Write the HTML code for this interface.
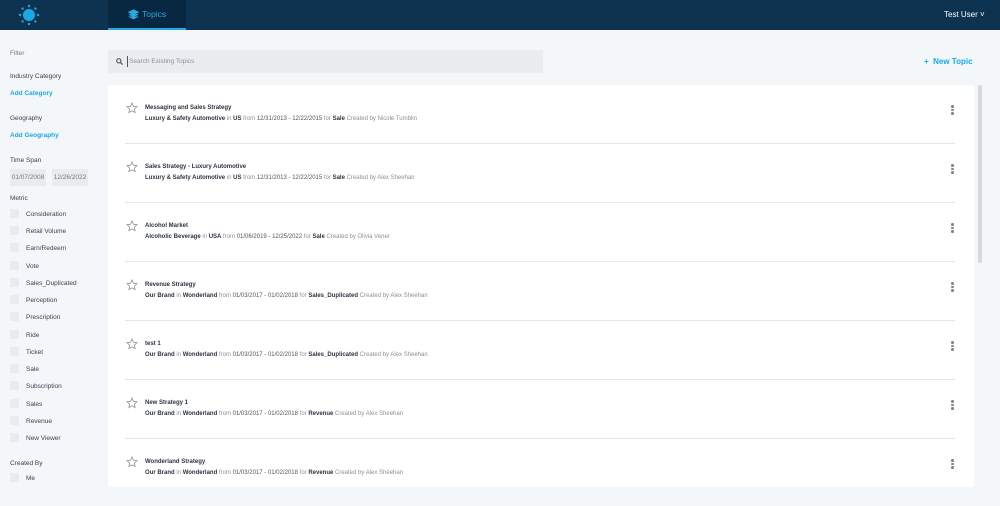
<!DOCTYPE html>
<html><head><style>
*{margin:0;padding:0;box-sizing:border-box}
body{width:1000px;height:506px;overflow:hidden;background:#f4f7fa;font-family:"Liberation Sans",sans-serif;font-size:7px;color:#2d3440;position:relative}
.hdr{position:absolute;left:0;top:0;width:1000px;height:30px;background:#0e3350}
.tab{position:absolute;left:108px;top:0;width:78px;height:30px;background:#072840;border-bottom:2px solid #27a8e0;color:#2aa8e0;font-size:8.5px;line-height:29px;padding-left:34px}
.user{position:absolute;left:944px;top:10px;color:#fff;font-size:8px}
.a{position:absolute;white-space:nowrap}
.lbl{color:#3a4150;font-size:6.5px}
.blue{color:#1ba9e6;font-weight:bold;font-size:6.5px}
.cb{position:absolute;left:10px;width:9px;height:9px;background:#e9ecef}
.ci{position:absolute;left:26px;font-size:6.5px;color:#3a4150}
.date{position:absolute;top:169px;height:17px;background:#e9ecef;color:#777;font-size:6.5px;line-height:17px;text-align:center}
.search{position:absolute;left:108px;top:50px;width:435px;height:23px;background:#e9edf0}
.card{position:absolute;left:108px;top:85px;width:866px;height:402px;background:#fff;border-radius:3px}
.row{position:absolute;left:17px;width:830px;height:59px;border-bottom:1px solid #e3e6ea}
.t{position:absolute;left:20px;top:20px;font-weight:bold;font-size:6px;color:#2d3440}
.s{position:absolute;left:20px;top:31px;font-size:6px;color:#8a909a;white-space:nowrap}
.s b{color:#2d3440}
.star{position:absolute;left:1px;top:17px}
.dots{position:absolute;left:826px;top:20px;width:3px}
.dots i{display:block;width:2.5px;height:2.5px;border-radius:50%;background:#7d8590;margin-bottom:1px}
</style></head><body>
<div class="hdr">
<svg style="position:absolute;left:18px;top:4px" width="22" height="22" viewBox="0 0 22 22"><circle cx="11" cy="11" r="6" fill="#1ba9e6"/><g fill="#1ba9e6"><circle cx="11" cy="2" r="1.2"/><circle cx="11" cy="20" r="1.2"/><circle cx="2" cy="11" r="1.2"/><circle cx="20" cy="11" r="1.2"/><circle cx="4.6" cy="4.6" r="1.2"/><circle cx="17.4" cy="4.6" r="1.2"/><circle cx="4.6" cy="17.4" r="1.2"/><circle cx="17.4" cy="17.4" r="1.2"/></g></svg>
<div class="tab"><svg style="position:absolute;left:20px;top:9px" width="11" height="11" viewBox="0 0 11 11"><path d="M5.5 1L10 3.2 5.5 5.4 1 3.2z M1 5.3l4.5 2.2 4.5-2.2 M1 7.5l4.5 2.2 4.5-2.2" fill="#2aa8e0" stroke="#2aa8e0" stroke-width="1.2"/></svg>Topics</div>
<div class="user">Test User ˅</div>
</div>
<div class="a lbl" style="left:10px;top:50px;color:#777">Filter</div>
<div class="a lbl" style="left:10px;top:73px">Industry Category</div>
<div class="a blue" style="left:10px;top:90px">Add Category</div>
<div class="a lbl" style="left:10px;top:115px">Geography</div>
<div class="a blue" style="left:10px;top:132px">Add Geography</div>
<div class="a lbl" style="left:10px;top:157px">Time Span</div>
<div class="date" style="left:10px;width:36px">01/07/2008</div>
<div class="date" style="left:52px;width:36px">12/26/2022</div>
<div class="a lbl" style="left:10px;top:195px">Metric</div>
<div class="cb" style="top:209px"></div><div class="ci a" style="top:211px">Consideration</div>
<div class="cb" style="top:226px"></div><div class="ci a" style="top:228px">Retail Volume</div>
<div class="cb" style="top:243px"></div><div class="ci a" style="top:245px">Earn/Redeem</div>
<div class="cb" style="top:261px"></div><div class="ci a" style="top:263px">Vote</div>
<div class="cb" style="top:278px"></div><div class="ci a" style="top:280px">Sales_Duplicated</div>
<div class="cb" style="top:295px"></div><div class="ci a" style="top:297px">Perception</div>
<div class="cb" style="top:312px"></div><div class="ci a" style="top:314px">Prescription</div>
<div class="cb" style="top:330px"></div><div class="ci a" style="top:332px">Ride</div>
<div class="cb" style="top:347px"></div><div class="ci a" style="top:349px">Ticket</div>
<div class="cb" style="top:364px"></div><div class="ci a" style="top:366px">Sale</div>
<div class="cb" style="top:381px"></div><div class="ci a" style="top:383px">Subscription</div>
<div class="cb" style="top:399px"></div><div class="ci a" style="top:401px">Sales</div>
<div class="cb" style="top:416px"></div><div class="ci a" style="top:418px">Revenue</div>
<div class="cb" style="top:433px"></div><div class="ci a" style="top:435px">New Viewer</div>
<div class="a lbl" style="left:10px;top:460px">Created By</div>
<div class="cb" style="top:473px"></div><div class="ci a" style="top:475px">Me</div>

<div class="search"><svg style="position:absolute;left:8px;top:8px" width="7" height="7" viewBox="0 0 7 7"><circle cx="2.8" cy="2.8" r="2.1" fill="none" stroke="#555" stroke-width="1.1"/><path d="M4.4 4.4L6.6 6.6" stroke="#555" stroke-width="1.2"/></svg><div style="position:absolute;left:19px;top:6px;width:1px;height:11px;background:#555"></div><div class="a" style="left:21px;top:8px;color:#8a909a;font-size:6.5px">Search Existing Topics</div></div>
<div class="a" style="left:924px;top:57px;color:#1ba9e6;font-weight:bold;font-size:8px">+&nbsp; New Topic</div>
<div style="position:absolute;left:978px;top:85px;width:4px;height:178px;background:#d6d9dc;border-radius:2px"></div>

<div class="card">
<div class="row" style="top:0"><svg class="star" width="12" height="12" viewBox="0 0 12 12"><path d="M6 1l1.5 3.3 3.5.4-2.6 2.4.7 3.5L6 8.8 2.9 10.6l.7-3.5L1 4.7l3.5-.4z" fill="none" stroke="#8a909a" stroke-width=".8"/></svg><div class="t">Messaging and Sales Strategy</div><div class="s"><b>Luxury &amp; Safety Automotive</b> in <b>US</b> from <b style="font-weight:normal;color:#555">12/31/2013 - 12/22/2015</b> for <b>Sale</b> Created by Nicole Tumblin</div><div class="dots"><i></i><i></i><i></i></div></div>
<div class="row" style="top:59px"><svg class="star" width="12" height="12" viewBox="0 0 12 12"><path d="M6 1l1.5 3.3 3.5.4-2.6 2.4.7 3.5L6 8.8 2.9 10.6l.7-3.5L1 4.7l3.5-.4z" fill="none" stroke="#8a909a" stroke-width=".8"/></svg><div class="t">Sales Strategy - Luxury Automotive</div><div class="s"><b>Luxury &amp; Safety Automotive</b> in <b>US</b> from <b style="font-weight:normal;color:#555">12/31/2013 - 12/22/2015</b> for <b>Sale</b> Created by Alex Sheehan</div><div class="dots"><i></i><i></i><i></i></div></div>
<div class="row" style="top:118px"><svg class="star" width="12" height="12" viewBox="0 0 12 12"><path d="M6 1l1.5 3.3 3.5.4-2.6 2.4.7 3.5L6 8.8 2.9 10.6l.7-3.5L1 4.7l3.5-.4z" fill="none" stroke="#8a909a" stroke-width=".8"/></svg><div class="t">Alcohol Market</div><div class="s"><b>Alcoholic Beverage</b> in <b>USA</b> from <b style="font-weight:normal;color:#555">01/06/2019 - 12/25/2022</b> for <b>Sale</b> Created by Olivia Vener</div><div class="dots"><i></i><i></i><i></i></div></div>
<div class="row" style="top:177px"><svg class="star" width="12" height="12" viewBox="0 0 12 12"><path d="M6 1l1.5 3.3 3.5.4-2.6 2.4.7 3.5L6 8.8 2.9 10.6l.7-3.5L1 4.7l3.5-.4z" fill="none" stroke="#8a909a" stroke-width=".8"/></svg><div class="t">Revenue Strategy</div><div class="s"><b>Our Brand</b> in <b>Wonderland</b> from <b style="font-weight:normal;color:#555">01/03/2017 - 01/02/2018</b> for <b>Sales_Duplicated</b> Created by Alex Sheehan</div><div class="dots"><i></i><i></i><i></i></div></div>
<div class="row" style="top:236px"><svg class="star" width="12" height="12" viewBox="0 0 12 12"><path d="M6 1l1.5 3.3 3.5.4-2.6 2.4.7 3.5L6 8.8 2.9 10.6l.7-3.5L1 4.7l3.5-.4z" fill="none" stroke="#8a909a" stroke-width=".8"/></svg><div class="t">test 1</div><div class="s"><b>Our Brand</b> in <b>Wonderland</b> from <b style="font-weight:normal;color:#555">01/03/2017 - 01/02/2018</b> for <b>Sales_Duplicated</b> Created by Alex Sheehan</div><div class="dots"><i></i><i></i><i></i></div></div>
<div class="row" style="top:295px"><svg class="star" width="12" height="12" viewBox="0 0 12 12"><path d="M6 1l1.5 3.3 3.5.4-2.6 2.4.7 3.5L6 8.8 2.9 10.6l.7-3.5L1 4.7l3.5-.4z" fill="none" stroke="#8a909a" stroke-width=".8"/></svg><div class="t">New Strategy 1</div><div class="s"><b>Our Brand</b> in <b>Wonderland</b> from <b style="font-weight:normal;color:#555">01/03/2017 - 01/02/2018</b> for <b>Revenue</b> Created by Alex Sheehan</div><div class="dots"><i></i><i></i><i></i></div></div>
<div class="row" style="top:354px;border:none"><svg class="star" width="12" height="12" viewBox="0 0 12 12"><path d="M6 1l1.5 3.3 3.5.4-2.6 2.4.7 3.5L6 8.8 2.9 10.6l.7-3.5L1 4.7l3.5-.4z" fill="none" stroke="#8a909a" stroke-width=".8"/></svg><div class="t">Wonderland Strategy</div><div class="s"><b>Our Brand</b> in <b>Wonderland</b> from <b style="font-weight:normal;color:#555">01/03/2017 - 01/02/2018</b> for <b>Revenue</b> Created by Alex Sheehan</div><div class="dots"><i></i><i></i><i></i></div></div>
</div>
</body></html>
